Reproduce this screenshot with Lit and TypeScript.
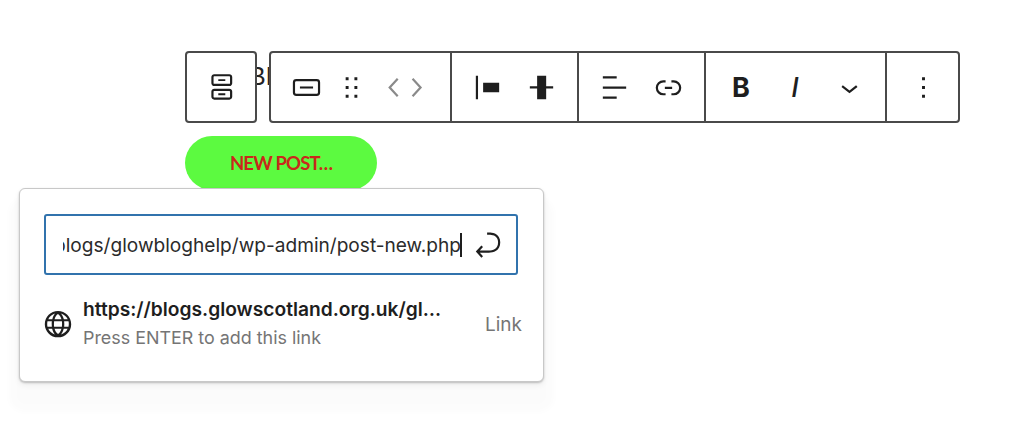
import { LitElement, html, css, svg } from 'lit';
import { customElement } from 'lit/decorators.js';

const URL_TEXT = 'https://blogs.glowscotland.org.uk/glowblogs/glowbloghelp/wp-admin/post-new.php';

const icon = (body: unknown, cls = '') => html`<svg class="icon ${cls}" viewBox="0 0 24 24">${body}</svg>`;

const ICONS = {
  stack: svg`<path fill="none" stroke="currentColor" stroke-width="1.5" d="M7 3.6h10.4a1.2 1.2 0 0 1 1.2 1.2v4.2a1.2 1.2 0 0 1-1.2 1.2H7a1.2 1.2 0 0 1-1.2-1.2V4.800a1.2 1.2 0 0 1 1.200-1.200zM7 13.600h10.400a1.200 1.200 0 0 1 1.200 1.200v3.600a1.200 1.200 0 0 1-1.200 1.200H7a1.200 1.200 0 0 1-1.200-1.200v-3.600a1.200 1.200 0 0 1 1.200-1.200z"/><path fill="currentColor" d="M9.800 6.300h4.800v1.300H9.800zM9.800 16h4.800v1.300H9.800z"/>`,
  button: svg`<rect x="3.400" y="7" width="17.200" height="10" rx="1.600" fill="none" stroke="currentColor" stroke-width="1.500"/><path fill="currentColor" d="M7.500 11.300h9v1.400h-9z"/>`,
  drag: svg`<path fill="currentColor" d="M8 7h2V5H8v2zm0 6h2v-2H8v2zm0 6h2v-2H8v2zm6-14v2h2V5h-2zm0 8h2v-2h-2v2zm0 6h2v-2h-2v2z"/>`,
  left: svg`<path fill="none" stroke="currentColor" stroke-width="1.500" d="M19 6 13.500 12l5.500 6"/>`,
  right: svg`<path fill="none" stroke="currentColor" stroke-width="1.500" d="M4.500 6 10 12l-5.500 6"/>`,
  alignLeft: svg`<path fill="currentColor" d="M4 4h1.500v16H4zM9 8.800h11v6.400H9z"/>`,
  alignCenter: svg`<path fill="currentColor" d="M9 4h6.200v7.200H20v1.500h-4.800V20H9v-7.300H4v-1.500h5z"/>`,
  justify: svg`<path fill="currentColor" d="M4 4.300h9.500v1.500H4zM4 11.300h16v1.500H4zM4 18.200h9.500v1.500H4z"/>`,
  link: svg`<path fill="currentColor" d="M10 17.389H8.444A5.194 5.194 0 1 1 8.444 7H10v1.500H8.444a3.694 3.694 0 0 0 0 7.389H10v1.500ZM14 7h1.556a5.194 5.194 0 0 1 0 10.390H14v-1.500h1.556a3.694 3.694 0 0 0 0-7.390H14V7Zm-4.500 6h5v-1.500h-5V13Z"/>`,
  chevron: svg`<path fill="currentColor" d="M17.500 11.600 12 16l-5.500-4.400.9-1.200L12 14l4.500-3.600 1 1.200z"/>`,
  more: svg`<path fill="currentColor" d="M13 19h-2v-2h2v2zm0-6h-2v-2h2v2zm0-6h-2V5h2v2z"/>`,
  enter: svg`<path fill="currentColor" d="M6.734 16.106l2.176-2.380-1.093-1.028-3.846 4.158 3.846 4.157 1.093-1.027-2.176-2.380h2.811c1.125 0 2.250.030 3.374 0 1.428-.001 3.362-.250 4.963-1.277 1.660-1.065 2.868-2.906 2.868-5.859 0-2.479-1.327-4.896-3.650-5.930-1.820-.813-3.044-.800-4.806-.788l-.567.002v1.500c.184 0 .368 0 .553-.002 1.820-.007 2.704-.014 4.210.657 1.854.827 2.760 2.657 2.760 4.561 0 2.472-.973 3.824-2.178 4.596-1.258.807-2.864 1.040-4.163 1.040h-.020c-1.115.030-2.229 0-3.344 0H6.734z"/>`,
  globe: svg`<path fill="currentColor" d="M12 3.300c-4.800 0-8.800 3.900-8.800 8.800 0 4.800 3.900 8.800 8.800 8.800 4.800 0 8.800-3.900 8.800-8.800s-4-8.800-8.800-8.800zm6.500 5.500h-2.600C15.400 7.300 14.800 6 14 5c2 .6 3.600 2 4.500 3.800zm.7 3.200c0 .6-.1 1.200-.2 1.800h-2.900c.1-.6.1-1.200.1-1.800s-.1-1.200-.1-1.800H19c.2.600.2 1.200.2 1.800zM12 18.700c-1-.7-1.800-1.900-2.300-3.500h4.600c-.5 1.600-1.300 2.900-2.300 3.500zm-2.600-4.900c-.1-.6-.1-1.100-.1-1.800 0-.6.1-1.200.1-1.800h5.200c.1.600.1 1.100.1 1.800s-.1 1.200-.1 1.800H9.400zM4.800 12c0-.6.1-1.200.2-1.800h2.900c-.1.600-.1 1.200-.1 1.800 0 .6.1 1.200.1 1.800H5c-.2-.6-.2-1.200-.2-1.800zM12 5.300c1 .7 1.800 1.900 2.300 3.500H9.700c.5-1.600 1.300-2.900 2.300-3.500zM10 5c-.8 1-1.400 2.300-1.800 3.800H5.500C6.400 7 8 5.600 10 5zM5.500 15.200h2.600c.4 1.500 1 2.800 1.800 3.800-1.900-.6-3.500-2-4.400-3.800zM14 19c.8-1 1.400-2.200 1.800-3.800h2.600C17.600 17 16 18.400 14 19z"/>`,
};

@customElement('app-root')
export class AppRoot extends LitElement {
  static styles = css`
    :host {
      display: block;
      position: relative;
      height: 425px;
      overflow: hidden;
      background: #fff;
      color: #1e1e1e;
      font-family: Inter, "Noto Sans", sans-serif;
    }
    .editor {
      padding: 51px 0 0 185px;
    }
    .behind {
      position: absolute;
      left: 249px;
      top: 60px;
      font: 25px/32px "Liberation Sans", sans-serif;
      color: #222;
    }
    .toolbar {
      position: relative;
      display: flex;
      gap: 12px;
      height: 72px;
    }
    .box {
      display: flex;
      box-sizing: border-box;
      height: 72px;
      background: #fff;
      border: 2px solid #4a4a4a;
      border-radius: 4px;
    }
    .single {
      width: 72px;
    }
    .single .btn {
      width: 68px;
    }
    .main {
      width: 691px;
    }
    .group {
      display: flex;
      align-items: center;
      box-sizing: border-box;
      padding: 0 8px;
      border-left: 2px solid #4a4a4a;
    }
    .group:first-child {
      border-left: 0;
    }
    .group:last-child {
      padding-left: 9px;
    }
    .btn {
      display: flex;
      flex: none;
      align-items: center;
      justify-content: center;
      width: 54px;
      height: 100%;
    }
    .narrow {
      width: 36px;
    }
    .mover {
      width: 36px;
      color: #8a8a8a;
    }
    .icon {
      display: block;
      flex: none;
      width: 35px;
      height: 35px;
    }
    .letter {
      font-size: 27px;
      line-height: 35px;
      font-weight: 700;
      color: #1e1e1e;
    }
    .italic {
      font-style: italic;
      font-weight: 500;
    }
    .cta {
      display: flex;
      align-items: center;
      justify-content: center;
      width: 192px;
      height: 54px;
      margin-top: 13px;
      border-radius: 27px;
      background: #5cfa40;
      color: #c9281b;
      font: 700 18.500px/24px Lato, sans-serif;
      letter-spacing: -0.800px;
      box-sizing: border-box;
    }
    .popover {
      position: absolute;
      left: 19px;
      top: 188px;
      box-sizing: border-box;
      width: 525px;
      height: 194px;
      padding: 25px 25px 25px 24px;
      background: #fff;
      border: 1px solid #c8c8c8;
      border-radius: 6px;
      box-shadow: 0 1px 2px rgba(0, 0, 0, 0.22), 0 3px 6px rgba(0, 0, 0, 0.06), 0 20px 6px 10px rgba(0, 0, 0, 0.014);
    }
    .field {
      display: flex;
      align-items: center;
      box-sizing: border-box;
      width: 474px;
      height: 61px;
      padding: 0 11px 0 17px;
      border: 2px solid #3173ad;
      border-radius: 3px;
    }
    .value {
      display: flex;
      flex: 1;
      justify-content: flex-end;
      min-width: 0;
      overflow: hidden;
      white-space: nowrap;
      font-size: 19.100px;
      line-height: 28px;
      color: #2b2b2b;
    }
    .value span {
      flex: none;
    }
    .caret {
      flex: none;
      width: 2px;
      height: 24px;
      margin: 0 0 0 -1px;
      background: #1e1e1e;
    }
    .field .icon {
      margin-left: 8px;
    }
    .result {
      display: flex;
      align-items: center;
      margin-top: 20px;
      gap: 7px;
    }
    .result .icon {
      width: 36px;
      height: 36px;
      margin-left: -4px;
    }
    .copy {
      width: 362px;
    }
    .title {
      overflow: hidden;
      white-space: nowrap;
      text-overflow: ellipsis;
      font-size: 19.200px;
      line-height: 28px;
      font-weight: 600;
    }
    .hint {
      font-size: 17.900px;
      line-height: 30px;
      color: #757575;
    }
    .kind {
      margin-left: auto;
      margin-right: -4px;
      font-size: 19px;
      color: #757575;
    }
  `;

  render() {
    return html`
      <div class="editor">
        <div class="behind">BL</div>
        <div class="toolbar">
          <div class="box single">
            <div class="btn">${icon(ICONS.stack)}</div>
          </div>
          <div class="box main">
            <div class="group" style="width:179px">
              <div class="btn">${icon(ICONS.button)}</div>
              <div class="btn narrow">${icon(ICONS.drag)}</div>
              <div class="btn mover">${icon(ICONS.left)}</div>
              <div class="btn mover">${icon(ICONS.right)}</div>
            </div>
            <div class="group" style="width:127px">
              <div class="btn">${icon(ICONS.alignLeft)}</div>
              <div class="btn">${icon(ICONS.alignCenter)}</div>
            </div>
            <div class="group" style="width:127px">
              <div class="btn">${icon(ICONS.justify)}</div>
              <div class="btn">${icon(ICONS.link)}</div>
            </div>
            <div class="group" style="width:181px">
              <div class="btn letter">B</div>
              <div class="btn letter italic">I</div>
              <div class="btn">${icon(ICONS.chevron)}</div>
            </div>
            <div class="group">
              <div class="btn">${icon(ICONS.more)}</div>
            </div>
          </div>
        </div>
        <div class="cta">NEW POST…</div>
      </div>
      <div class="popover">
        <div class="field">
          <div class="value"><span>${URL_TEXT}</span></div>
          <div class="caret"></div>
          ${icon(ICONS.enter)}
        </div>
        <div class="result">
          ${icon(ICONS.globe)}
          <div class="copy">
            <div class="title">${URL_TEXT}</div>
            <div class="hint">Press ENTER to add this link</div>
          </div>
          <div class="kind">Link</div>
        </div>
      </div>
    `;
  }
}
